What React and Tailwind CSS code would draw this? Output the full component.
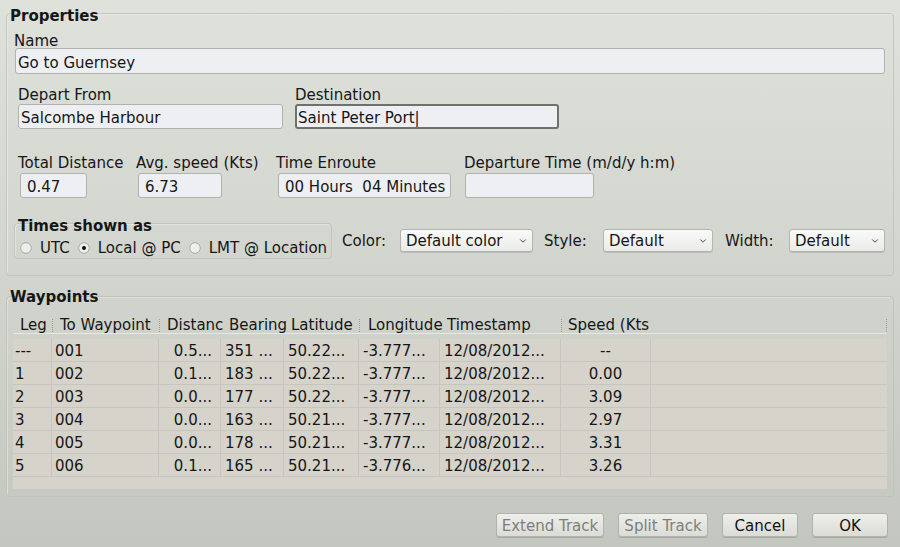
import { ChevronDown } from 'lucide-react';

const columns = [
  { key: 'leg', title: 'Leg', width: 'w-[39px]', head: 'pl-[7px]', cell: 'pl-[2px]' },
  { key: 'to', title: 'To Waypoint', width: 'w-[107px]', head: 'pl-[7px] border-l border-dotted border-[#9a9c96]', cell: 'pl-[3px]' },
  { key: 'dist', title: 'Distanc', width: 'w-[62px]', head: 'pl-[7px] border-l border-dotted border-[#9a9c96]', cell: 'pr-[8px] justify-end' },
  { key: 'brg', title: 'Bearing', width: 'w-[63px]', head: 'pl-[8px]', cell: 'pl-[4px]' },
  { key: 'lat', title: 'Latitude', width: 'w-[75px]', head: 'pl-[7px]', cell: 'pl-[4px]' },
  { key: 'lon', title: 'Longitude', width: 'w-[81px]', head: 'pl-[8px] border-l border-dotted border-[#9a9c96]', cell: 'pl-[4px]' },
  { key: 'ts', title: 'Timestamp', width: 'w-[121px]', head: 'pl-[7px]', cell: 'pl-[4px]' },
  { key: 'spd', title: 'Speed (Kts', width: 'w-[90px]', head: 'pl-[6px] border-l border-dotted border-[#9a9c96]', cell: 'justify-center' },
];

const rows = [
  { leg: '---', to: '001', dist: '0.5...', brg: '351 ...', lat: '50.22...', lon: '-3.777...', ts: '12/08/2012...', spd: '--' },
  { leg: '1', to: '002', dist: '0.1...', brg: '183 ...', lat: '50.22...', lon: '-3.777...', ts: '12/08/2012...', spd: '0.00' },
  { leg: '2', to: '003', dist: '0.0...', brg: '177 ...', lat: '50.22...', lon: '-3.777...', ts: '12/08/2012...', spd: '3.09' },
  { leg: '3', to: '004', dist: '0.0...', brg: '163 ...', lat: '50.21...', lon: '-3.777...', ts: '12/08/2012...', spd: '2.97' },
  { leg: '4', to: '005', dist: '0.0...', brg: '178 ...', lat: '50.21...', lon: '-3.777...', ts: '12/08/2012...', spd: '3.31' },
  { leg: '5', to: '006', dist: '0.1...', brg: '165 ...', lat: '50.21...', lon: '-3.776...', ts: '12/08/2012...', spd: '3.26' },
];

// text in this font sits a little high, so labels carry a small top pad
function Label({ children, className = '' }) {
  return <div className={`h-[17px] whitespace-nowrap pt-[2px] ${className}`}>{children}</div>;
}

function Field({ value, className, focused }) {
  return (
    <div
      className={`flex items-center whitespace-pre rounded-[3px] bg-[#eeeff2] pt-[4px] leading-[17px] ${
        focused ? 'border-2 border-[#6f716d] pl-[1px]' : 'border border-[#b0b2ad] pl-[2px]'
      } ${className}`}
    >
      {value}
    </div>
  );
}

function Select({ value, className }) {
  return (
    <div
      className={`flex h-[23px] items-center justify-between rounded-[3px] border border-[#b3b5b0] bg-gradient-to-b from-[#fafaf9] to-[#ebebe8] pl-[5px] pr-[4px] leading-[17px] shadow-[0_1px_0_#b9bbb5] ${className}`}
    >
      <span className="pt-[2px]">{value}</span>
      <ChevronDown size={10} strokeWidth={2} className="text-[#333]" />
    </div>
  );
}

function Radio({ checked, label }) {
  return (
    <div className="flex items-center">
      <svg width="12" height="12" viewBox="0 0 12 12" className="shrink-0">
        <circle cx="6" cy="6" r="5.3" fill="#eeeeec" stroke="#a9aba6" strokeWidth="1" />
        {checked && <circle cx="6" cy="6" r="2" fill="#111" />}
      </svg>
      <span className="ml-[8px] pt-[2px]">{label}</span>
    </div>
  );
}

function Button({ children, disabled, className }) {
  return (
    <div
      className={`flex h-[24px] items-center justify-center rounded-[3px] border border-[#b0b2ac] bg-gradient-to-b from-[#eeeeea] to-[#dcdcd7] pt-[3px] leading-[17px] shadow-[0_1px_0_#a9aba5] ${
        disabled ? 'text-[#7d7f7b]' : 'text-[#111]'
      } ${className}`}
    >
      {children}
    </div>
  );
}

export default function App() {
  return (
    <div
      className="h-[547px] w-[900px] overflow-hidden bg-gradient-to-b from-[#dfe1db] via-[#d2d5cd] to-[#c4c7bf] px-[6px] text-[15px] leading-[17px] text-[#161616]"
      style={{ fontFamily: '"DejaVu Sans", Verdana, sans-serif' }}
    >
      {/* Properties */}
      <div className="mt-[13px] h-[263px] rounded-[4px] border border-[#c4c6bf] shadow-[inset_1px_1px_0_#e6e7e2]">
        <Label className="-mt-[9px] ml-[3px] !pt-[3px] font-bold">Properties</Label>

        <Label className="ml-[7px] mt-[9px]">Name</Label>
        <Field value="Go to Guernsey" className="ml-[8px] h-[26px] w-[870px]" />

        <div className="mt-[11px] flex">
          <div className="ml-[11px] w-[277px]">
            <Label>Depart From</Label>
            <Field value="Salcombe Harbour" className="mt-[2px] h-[25px] w-[265px]" />
          </div>
          <div>
            <Label>Destination</Label>
            <Field value="Saint Peter Port|" className="mt-[2px] h-[25px] w-[264px]" focused />
          </div>
        </div>

        <div className="mt-[24px] flex">
          <div className="ml-[11px] w-[118px]">
            <Label>Total Distance</Label>
            <Field value="0.47" className="ml-[2px] mt-[3px] h-[25px] w-[67px] !pl-[6px]" />
          </div>
          <div className="w-[140px]">
            <Label>Avg. speed (Kts)</Label>
            <Field value="6.73" className="ml-[2px] mt-[3px] h-[25px] w-[84px] !pl-[6px]" />
          </div>
          <div className="w-[188px]">
            <Label>Time Enroute</Label>
            <Field value="00 Hours  04 Minutes" className="ml-[2px] mt-[3px] h-[25px] w-[173px] !pl-[6px]" />
          </div>
          <div>
            <Label>Departure Time (m/d/y h:m)</Label>
            <Field value="" className="ml-[1px] mt-[3px] h-[25px] w-[129px]" />
          </div>
        </div>

        <div className="mt-[18px] flex items-start">
          <div className="ml-[7px] mt-[7px] h-[36px] w-[318px] rounded-[4px] border border-[#c3c5be] shadow-[inset_1px_1px_0_#e3e4df]">
            <Label className="-mt-[8px] ml-[3px] font-bold">Times shown as</Label>
            <div className="ml-[5px] mt-[5px] flex gap-[8px]">
              <Radio label="UTC" />
              <Radio label="Local @ PC" checked />
              <Radio label="LMT @ Location" />
            </div>
          </div>
          <div className="ml-[10px] mt-[13px] flex items-center">
            <span className="w-[58px] pt-[2px]">Color:</span>
            <Select value="Default color" className="w-[133px]" />
            <span className="ml-[11px] w-[59px] pt-[2px]">Style:</span>
            <Select value="Default" className="w-[110px]" />
            <span className="ml-[12px] w-[64px] pt-[2px]">Width:</span>
            <Select value="Default" className="w-[96px]" />
          </div>
        </div>
      </div>

      {/* Waypoints */}
      <div className="mt-[20px] h-[201px] rounded-[4px] border border-[#c0c3bb] px-[6px] shadow-[inset_1px_1px_0_#dcded8]">
        <Label className="-mt-[10px] ml-[-3px] font-bold">Waypoints</Label>

        <div className="mt-[11px] flex h-[19px] items-center border-b border-[#e7e7e3] pt-[2px]">
          {columns.map((c) => (
            <div key={c.key} className={`${c.width} ${c.head} h-[13px] shrink-0 whitespace-nowrap leading-[13px]`}>
              {c.title}
            </div>
          ))}
          <div className="h-[13px] flex-1 border-r border-dotted border-[#9a9c96]" />
        </div>

        <div className="mt-[5px] h-[150px] bg-[#d6d3cb]">
          {rows.map((r) => (
            <div key={r.leg} className="flex h-[23px] border-b border-[#c6c5bf]">
              {columns.map((c) => (
                <div
                  key={c.key}
                  className={`${c.width} ${c.cell} flex h-full shrink-0 items-center whitespace-nowrap border-r border-[#c6c5bf] pt-[2px]`}
                >
                  {r[c.key]}
                </div>
              ))}
              <div className="flex-1" />
            </div>
          ))}
        </div>
      </div>

      <div className="mt-[16px] flex justify-end gap-[14px] pr-[6px]">
        <Button disabled className="w-[108px]">Extend Track</Button>
        <Button disabled className="w-[90px]">Split Track</Button>
        <Button className="w-[76px]">Cancel</Button>
        <Button className="w-[76px]">OK</Button>
      </div>
    </div>
  );
}
